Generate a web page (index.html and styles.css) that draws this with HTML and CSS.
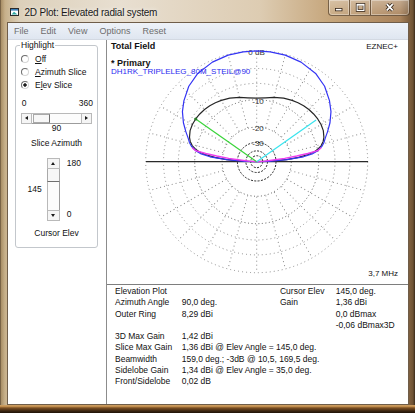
FILE: index.html
```html
<!DOCTYPE html>
<html lang="en">
<head>
    <meta charset="UTF-8">
    <title>2D Plot: Elevated radial system</title>
    <link rel="stylesheet" href="styles.css">
</head>
<body>

<div class="window">
    <div class="titlebar">
        <svg class="app-icon" width="9" height="8" viewBox="0 0 9 8">
            <rect x="0.5" y="0.5" width="8" height="7" fill="#fff" stroke="#2b2b2b"/>
            <rect x="1" y="1" width="7" height="1.6" fill="#3a7fb8"/>
            <path d="M1.5 6.5 L4 3.8 L7.5 6.5 Z" fill="#2fa6a0"/>
        </svg>
        <span class="title">2D Plot: Elevated radial system</span>
        <div class="caption-buttons">
            <span class="cbtn">
                <svg width="21" height="15" viewBox="0 0 21 15">
                    <rect x="7" y="8.5" width="7" height="2.6" fill="#fff" stroke="#2a1c10" stroke-width="0.8"/>
                </svg>
            </span>
            <span class="cbtn">
                <svg width="21" height="15" viewBox="0 0 21 15">
                    <rect x="7.3" y="4.3" width="7" height="6.2" fill="none" stroke="#2a1c10" stroke-width="2.6"/>
                    <rect x="7.3" y="4.3" width="7" height="6.2" fill="none" stroke="#fff" stroke-width="1.2"/>
                    <line x1="7.3" y1="5" x2="14.3" y2="5" stroke="#fff" stroke-width="1.2"/>
                </svg>
            </span>
            <span class="cbtn close">
                <svg width="38" height="15" viewBox="0 0 38 15">
                    <path d="M16 4 L22 10.5 M22 4 L16 10.5" stroke="#2a1c10" stroke-width="3.4"/>
                    <path d="M16 4 L22 10.5 M22 4 L16 10.5" stroke="#fff" stroke-width="1.8"/>
                </svg>
            </span>
        </div>
    </div>

    <div class="client">
        <div class="menubar">
            <span>File</span>
            <span>Edit</span>
            <span>View</span>
            <span>Options</span>
            <span>Reset</span>
        </div>

        <div class="main">
            <div class="sidepanel">
                <fieldset class="group">
                    <legend>Highlight</legend>
                    <div class="radios">
                        <div class="radio"><span class="mark"></span><span><u>O</u>ff</span></div>
                        <div class="radio"><span class="mark"></span><span><u>A</u>zimuth Slice</span></div>
                        <div class="radio"><span class="mark checked"></span><span>E<u>l</u>ev Slice</span></div>
                    </div>

                    <div class="hscale"><span>0</span><span>360</span></div>
                    <div class="hscroll">
                        <span class="sb-btn"><i class="arrow-left"></i></span>
                        <span class="thumb"></span>
                        <span class="sb-btn right"><i class="arrow-right"></i></span>
                    </div>
                    <div class="slider-value">90</div>
                    <div class="slider-label">Slice Azimuth</div>

                    <div class="vslider">
                        <span class="vs-value">145</span>
                        <div class="vscroll">
                            <span class="sb-btn"><i class="arrow-up"></i></span>
                            <span class="thumb"></span>
                            <span class="sb-btn bottom"><i class="arrow-down"></i></span>
                        </div>
                        <div class="vs-scale"><span>180</span><span>0</span></div>
                    </div>
                    <div class="slider-label cursor">Cursor Elev</div>
                </fieldset>
            </div>

            <div class="viewer">
                <div class="plot">
                    <svg class="polar" viewBox="107 40 301 244" width="301" height="244">
                        <g transform="translate(256.7 161.7)" fill="none">
                            <!-- rings, ARRL log scale -->
                            <g stroke="#8c8c8c" stroke-dasharray="1 3">
                                <circle r="111"/>
                                <circle r="93.2"/>
                                <circle r="78.3"/>
                            </g>
                            <g stroke="#5a5a5a" stroke-dasharray="1 2.5">
                                <circle r="62"/>
                                <circle r="34.6"/>
                            </g>
                            <g stroke="#262626" stroke-dasharray="2 1.4">
                                <circle r="19.3"/>
                                <circle r="10.8"/>
                                <circle r="6"/>
                            </g>
                            <!-- spokes -->
                            <g stroke="#8c8c8c" stroke-dasharray="1 3">
                                <line x1="35" x2="111" transform="rotate(15)"/>
                                <line x1="35" x2="111" transform="rotate(30)"/>
                                <line x1="35" x2="111" transform="rotate(45)"/>
                                <line x1="35" x2="111" transform="rotate(60)"/>
                                <line x1="35" x2="111" transform="rotate(75)"/>
                                <line x1="35" x2="111" transform="rotate(90)"/>
                                <line x1="35" x2="111" transform="rotate(105)"/>
                                <line x1="35" x2="111" transform="rotate(120)"/>
                                <line x1="35" x2="111" transform="rotate(135)"/>
                                <line x1="35" x2="111" transform="rotate(150)"/>
                                <line x1="35" x2="111" transform="rotate(165)"/>
                                <line x1="35" x2="111" transform="rotate(195)"/>
                                <line x1="35" x2="111" transform="rotate(210)"/>
                                <line x1="35" x2="111" transform="rotate(225)"/>
                                <line x1="35" x2="111" transform="rotate(240)"/>
                                <line x1="35" x2="111" transform="rotate(255)"/>
                                <line x1="35" x2="111" transform="rotate(270)"/>
                                <line x1="35" x2="111" transform="rotate(285)"/>
                                <line x1="35" x2="111" transform="rotate(300)"/>
                                <line x1="35" x2="111" transform="rotate(315)"/>
                                <line x1="35" x2="111" transform="rotate(330)"/>
                                <line x1="35" x2="111" transform="rotate(345)"/>
                            </g>
                            <line x1="-110.7" x2="111.3" stroke="#2a2a2a" stroke-width="1.3"/>

                            <g class="ring-labels">
                                <text x="-0.2" y="-107.2">0 dB</text>
                                <text x="1.3" y="-57.8">-10</text>
                                <text x="1.3" y="-31.1">-20</text>
                                <text x="1.3" y="-16.1">-30</text>
                            </g>

                            <!-- traces -->
                            <polyline stroke="#262626" stroke-width="1.2" stroke-linejoin="round"
                                points="0,0 13.99,-0.49 29.93,-2.09 41.77,-4.39 51.49,-7.24 58.1,-10.24 61.62,-13.1 64.52,-16.09 66.46,-20.32 67.19,-24.45 66.61,-31.06 64.34,-37.15 61.03,-42.73 56.91,-47.76 52.18,-52.18 46.92,-55.92 41.3,-58.98 35.4,-61.31 26.96,-63.51 17.21,-64.23 8.98,-63.87 0,-63.5 -8.98,-63.87 -17.21,-64.23 -26.96,-63.51 -35.4,-61.31 -41.3,-58.98 -46.92,-55.92 -52.18,-52.18 -56.91,-47.76 -61.03,-42.73 -64.34,-37.15 -66.61,-31.06 -67.19,-24.45 -66.46,-20.32 -64.52,-16.09 -61.62,-13.1 -58.1,-10.24 -51.49,-7.24 -41.77,-4.39 -29.93,-2.09 -13.99,-0.49 0,0"/>
                            <polyline stroke="#3434f4" stroke-width="1.2" stroke-linejoin="round"
                                points="0,0 11.99,-0.42 29.93,-2.09 46.74,-4.91 55.46,-7.8 60.57,-10.68 64.99,-15.01 67.29,-19.29 68.55,-23.61 70.88,-30.08 73.28,-38.97 74.28,-50.1 72.77,-61.07 67.91,-75.43 59.27,-87.87 44.33,-99.57 28.55,-106.54 13.49,-109.87 0,-110.8 -13.49,-109.87 -28.55,-106.54 -44.33,-99.57 -59.27,-87.87 -67.91,-75.43 -72.77,-61.07 -74.28,-50.1 -73.28,-38.97 -70.88,-30.08 -68.55,-23.61 -67.29,-19.29 -64.99,-15.01 -60.57,-10.68 -55.46,-7.8 -46.74,-4.91 -29.93,-2.09 -11.99,-0.42 0,0"/>
                            <polyline stroke="#ee3cee" stroke-width="1.3" stroke-linejoin="round"
                                points="-64.5,-14 -61,-11 -51,-8.2 -40,-5.7 -28,-3.4 -16.6,-1.7 -8,-0.6 0,0 8,-0.6 16.6,-1.7 28,-3.4 40,-5.7 51,-8.2 61,-11 64.5,-14"/>
                            <line x1="0" y1="0" x2="-61" y2="-42.7" stroke="#3ad43a" stroke-width="1.2"/>
                            <circle cx="-61" cy="-42.7" r="1.6" fill="#2a7a2a"/>
                            <line x1="0" y1="0" x2="59.4" y2="-41.6" stroke="#38e4ee" stroke-width="1.2"/>
                        </g>
                    </svg>

                    <div class="plot-head">
                        <b>Total Field</b>
                        <span>EZNEC+</span>
                    </div>
                    <div class="trace-title">* Primary</div>
                    <div class="trace-file">DH1RK_TRIPLELEG_80M_STEIL@90</div>
                    <div class="freq">3,7 MHz</div>
                </div>

                <div class="info">
                    <span>Elevation Plot</span><span></span><span>Cursor Elev</span><span>145,0 deg.</span>
                    <span>Azimuth Angle</span><span>90,0 deg.</span><span>Gain</span><span>1,36 dBi</span>
                    <span>Outer Ring</span><span>8,29 dBi</span><span></span><span>0,0 dBmax</span>
                    <span></span><span></span><span></span><span>-0,06 dBmax3D</span>
                    <span>3D Max Gain</span><span class="wide">1,42 dBi</span>
                    <span>Slice Max Gain</span><span class="wide">1,36 dBi @ Elev Angle = 145,0 deg.</span>
                    <span>Beamwidth</span><span class="wide">159,0 deg.; -3dB @ 10,5, 169,5 deg.</span>
                    <span>Sidelobe Gain</span><span class="wide">1,34 dBi @ Elev Angle = 35,0 deg.</span>
                    <span>Front/Sidelobe</span><span class="wide">0,02 dB</span>
                </div>
            </div>
        </div>
    </div>
</div>

</body>
</html>
```

FILE: styles.css
```css
:root {
    --lineGrey: #8c8c8c;
    --groupBorder: #c3c7cc;
    --sbBorder: #b9b9b9;
}

* {
    box-sizing: border-box;
}

body {
    margin: 0;
    font-family: "Liberation Sans", Arial, sans-serif;
    color: #111;
}

/* Window frame */
.window {
    width: 415px;
    height: 413px;
    display: flex;
    flex-direction: column;
    overflow: hidden;
    background:
        linear-gradient(to top, #1e1208 0, #3a2410 2px, #7a4e22 5px, #d6a05a 7px, #bf9662 8px, rgba(191, 150, 98, 0) 8px),
        linear-gradient(90deg, #4a3826 0, #a88e66 1px, #c7b08a 5px, #dcd0ba 20px, #e8dfd1 120px, #ddccb2 260px, #c6a67c 330px, #a9825a 400px, #6e5234 413px, #3a2a1a 415px);
}

.titlebar {
    height: 22px;
    display: flex;
    align-items: center;
    padding: 2px 5.5px 0 9.5px;
}

.app-icon {
    margin-right: 6px;
}

.title {
    font-size: 10px;
    letter-spacing: -0.2px;
    color: #1a1a1a;
    text-shadow: 0 0 4px rgba(255, 255, 255, 0.9);
}

.caption-buttons {
    display: flex;
    margin-left: auto;
    align-self: flex-start;
    margin-top: -2px;
}

.cbtn {
    display: flex;
    width: 21.5px;
    height: 16px;
    border: 1px solid rgba(58, 38, 18, 0.6);
    border-top: none;
    border-left: none;
    background: linear-gradient(rgba(255, 255, 255, 0.32), rgba(255, 255, 255, 0.08));
    box-shadow: inset 0 0 0 1px rgba(255, 255, 255, 0.35);
}

.cbtn:first-child {
    border-left: 1px solid rgba(58, 38, 18, 0.6);
    border-bottom-left-radius: 4px;
}

.cbtn.close {
    width: 38.5px;
    border-bottom-right-radius: 4px;
}

/* Client area */
.client {
    flex: 1;
    margin: 0 6px 8px 7px;
    border: 1px solid #6f5d49;
    background: #fff;
    display: flex;
    flex-direction: column;
}

.menubar {
    height: 16px;
    display: flex;
    gap: 12px;
    padding-left: 6px;
    align-items: center;
    font-size: 9px;
    color: #6d6d6d;
    background: linear-gradient(#eef2f8, #dfe6f0);
}

.main {
    flex: 1;
    display: flex;
    border-top: 1px solid #d3d9e2;
}

/* Left panel */
.sidepanel {
    width: 98px;
    font-size: 8.5px;
}

.group {
    margin: 0 8px 0 7px;
    padding: 0 0 7.9px;
    border: 1px solid var(--groupBorder);
    border-radius: 3px;
    min-inline-size: 0;
}

.group legend {
    margin-left: 4px;
    padding: 0 1px;
    line-height: 11px;
}

.radios {
    padding-top: 2px;
}

.radio {
    height: 12.8px;
    display: flex;
    align-items: center;
    padding-left: 5px;
}

.mark {
    width: 8px;
    height: 8px;
    margin-right: 6px;
    border-radius: 50%;
    border: 1px solid;
    border-color: #6e6e6e #d6d6d6 #d6d6d6 #6e6e6e;
    background: #fff;
}

.mark.checked {
    background: radial-gradient(circle, #1e1e1e 0 1.4px, #fff 2px);
}

.hscale {
    display: flex;
    justify-content: space-between;
    margin: 6.4px 4px 0 5.7px;
    line-height: 11px;
}

.hscroll {
    display: flex;
    width: 71px;
    height: 11px;
    margin: 4.2px 0 0 5px;
    border-top: 1px solid var(--sbBorder);
    border-bottom: 1px solid #9c9c9c;
    background: #fcfcfc;
}

.sb-btn {
    width: 10.7px;
    display: flex;
    align-items: center;
    justify-content: center;
    background: #f5f5f5;
    border: 1px solid var(--sbBorder);
}

.hscroll .sb-btn {
    height: 11px;
    margin-top: -1px;
}

.sb-btn.right {
    margin-left: auto;
}

.hscroll .thumb {
    width: 16.7px;
    margin-left: 1.6px;
    border: 1px solid #a9a9a9;
    border-right-color: #6f6f6f;
    background: #f7f7f7;
}

.arrow-left, .arrow-right, .arrow-up, .arrow-down {
    width: 0;
    height: 0;
    border: 2.5px solid transparent;
}

.arrow-left {
    border-right: 3px solid #1a1a1a;
    border-left: none;
}

.arrow-right {
    border-left: 3px solid #1a1a1a;
    border-right: none;
}

.arrow-up {
    border-bottom: 3px solid #1a1a1a;
    border-top: none;
}

.arrow-down {
    border-top: 3px solid #1a1a1a;
    border-bottom: none;
}

.slider-value {
    text-align: center;
    line-height: 9px;
}

.slider-label {
    text-align: center;
    line-height: 11px;
    margin-top: 4.8px;
}

.slider-label.cursor {
    margin-top: 7.1px;
}

.vslider {
    display: flex;
    align-items: center;
    margin-top: 9.5px;
    padding-left: 4.7px;
}

.vs-value {
    width: 21px;
    margin-right: 5px;
    text-align: right;
}

.vscroll {
    width: 13.3px;
    height: 62.4px;
    display: flex;
    flex-direction: column;
    border-left: 1px solid var(--sbBorder);
    border-right: 1px solid #9c9c9c;
    background: #fcfcfc;
}

.vscroll .sb-btn {
    width: auto;
    height: 11px;
    margin: 0 -1px;
}

.sb-btn.bottom {
    margin-top: auto;
    height: 10.7px;
}

.vscroll .thumb {
    height: 12.4px;
    border: 1px solid #a9a9a9;
    border-bottom-color: #6f6f6f;
    border-top: none;
    margin: 0 -1px;
    background: #f7f7f7;
}

.vs-scale {
    align-self: stretch;
    display: flex;
    flex-direction: column;
    justify-content: space-between;
    margin-left: 6.7px;
    padding-bottom: 1.5px;
    line-height: 10px;
}

/* Plot */
.viewer {
    flex: 1;
    display: flex;
    flex-direction: column;
    border-left: 1px solid var(--lineGrey);
}

.plot {
    height: 245px;
    position: relative;
    isolation: isolate;
    border-bottom: 1px solid #7e7e7e;
    padding: 1px 10px 0 4px;
    display: flex;
    flex-direction: column;
    font-size: 8px;
}

.polar {
    position: absolute;
    top: 0;
    left: 0;
    z-index: -1;
}

.ring-labels text {
    font-family: "Liberation Sans", Arial, sans-serif;
    font-size: 8px;
    fill: #333;
    stroke: none;
    text-anchor: middle;
}

.plot-head {
    display: flex;
    justify-content: space-between;
    line-height: 11px;
}

.plot-head b {
    font-size: 9px;
}

.trace-title {
    font-weight: bold;
    font-size: 9px;
    line-height: 9px;
    margin-top: 6.5px;
}

.trace-file {
    color: #2b2bf0;
    line-height: 8.5px;
}

.freq {
    margin-top: auto;
    margin-bottom: 5px;
    text-align: right;
    line-height: 11px;
}

/* Info block */
.info {
    flex: 1;
    display: grid;
    grid-template-columns: 66.7px 98.3px 55.7px 1fr;
    grid-auto-rows: 11.3px;
    padding: 1px 0 0 8px;
    font-size: 8.5px;
    line-height: 11.3px;
    white-space: nowrap;
}

.info .wide {
    grid-column: span 3;
}
```
